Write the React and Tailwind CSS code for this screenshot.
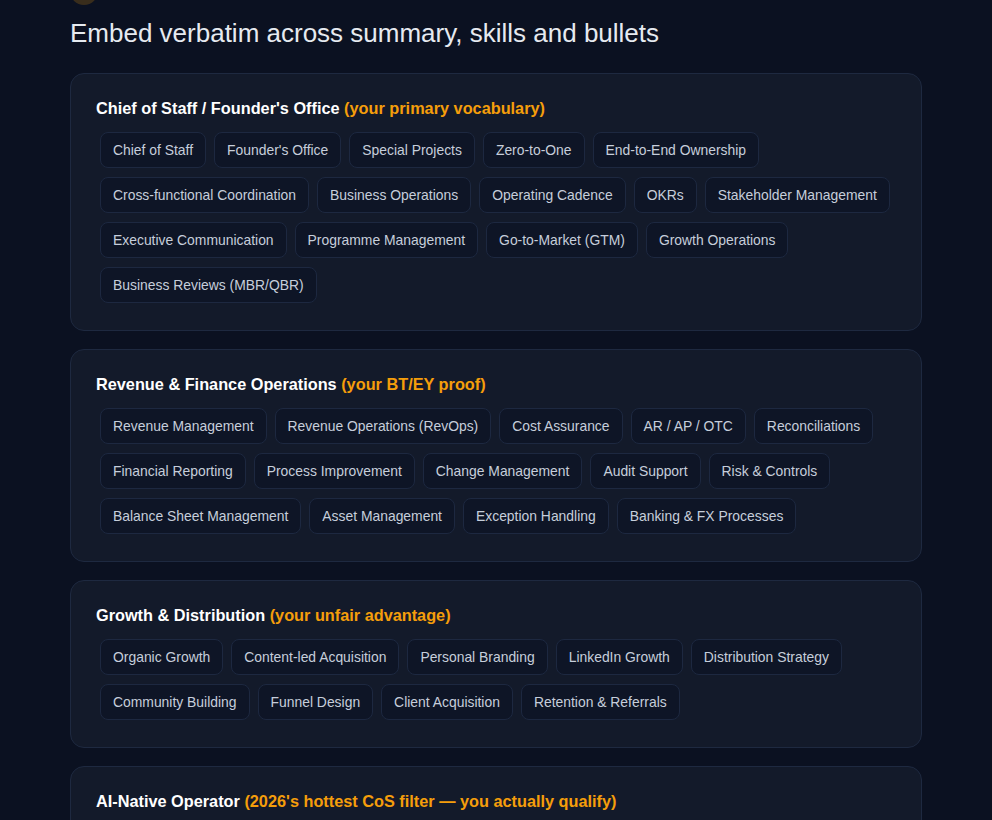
import React from 'react';

const sections = [
  {
    title: 'Chief of Staff / Founder\'s Office',
    note: '(your primary vocabulary)',
    tags: [
      'Chief of Staff',
      "Founder's Office",
      'Special Projects',
      'Zero-to-One',
      'End-to-End Ownership',
      'Cross-functional Coordination',
      'Business Operations',
      'Operating Cadence',
      'OKRs',
      'Stakeholder Management',
      'Executive Communication',
      'Programme Management',
      'Go-to-Market (GTM)',
      'Growth Operations',
      'Business Reviews (MBR/QBR)',
    ],
  },
  {
    title: 'Revenue & Finance Operations',
    note: '(your BT/EY proof)',
    tags: [
      'Revenue Management',
      'Revenue Operations (RevOps)',
      'Cost Assurance',
      'AR / AP / OTC',
      'Reconciliations',
      'Financial Reporting',
      'Process Improvement',
      'Change Management',
      'Audit Support',
      'Risk & Controls',
      'Balance Sheet Management',
      'Asset Management',
      'Exception Handling',
      'Banking & FX Processes',
    ],
  },
  {
    title: 'Growth & Distribution',
    note: '(your unfair advantage)',
    tags: [
      'Organic Growth',
      'Content-led Acquisition',
      'Personal Branding',
      'LinkedIn Growth',
      'Distribution Strategy',
      'Community Building',
      'Funnel Design',
      'Client Acquisition',
      'Retention & Referrals',
    ],
  },
  {
    // tags of this one sit below the fold in the screenshot
    title: 'AI-Native Operator',
    note: "(2026's hottest CoS filter — you actually qualify)",
    tags: [],
  },
];

const Tag = ({ children }) => (
  <span className="rounded-lg border border-[#1d2840] bg-[#0e1526] px-3 py-2 text-[13.9px] leading-[18px] text-[#c6cedb]">
    {children}
  </span>
);

const Section = ({ title, note, tags }) => (
  <div className="min-h-[120px] rounded-[14px] border border-[#1e2940] bg-[#131a2a] px-[25px] pt-[22px] pb-[23px]">
    <h3 className="text-[16.3px] font-bold leading-6 text-white">
      {title} <span className="text-[#f59e0b]">{note}</span>
    </h3>
    {tags.length > 0 && (
      <div className="mt-[12px] flex flex-wrap gap-x-2 gap-y-[9px] pl-1 pb-1">
        {tags.map((t) => (
          <Tag key={t}>{t}</Tag>
        ))}
      </div>
    )}
  </div>
);

export default function App() {
  return (
    <div
      className="h-[820px] overflow-hidden bg-[#0b1121] px-[70px]"
      style={{ fontFamily: '"Liberation Sans", Arial, sans-serif' }}
    >
      {/* scrolled-off avatar */}
      <div className="-mt-[23px] h-7 w-7 rounded-full bg-[#f59e0b]/20"></div>
      <h1 className="mt-[12px] text-[26px] font-light leading-8 text-[#e6eaf0]">
        Embed verbatim across summary, skills and bullets
      </h1>
      <div className="mt-6 flex w-[852px] flex-col gap-[18px] pb-10">
        {sections.map((s) => (
          <Section key={s.title} {...s} />
        ))}
      </div>
    </div>
  );
}
